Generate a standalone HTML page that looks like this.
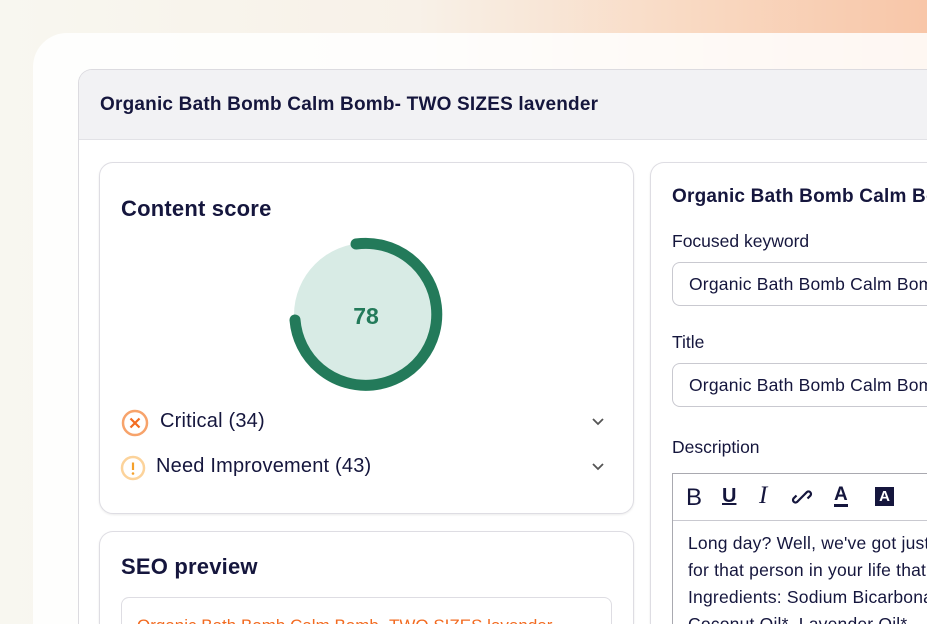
<!DOCTYPE html>
<html><head><meta charset="utf-8"><style>
*{margin:0;padding:0;box-sizing:border-box}
html,body{width:927px;height:624px;overflow:hidden}
body{position:relative;font-family:"Liberation Sans",sans-serif;color:#15163d;
background:linear-gradient(90deg,#f8f7f0 0%,#f8f1e8 45%,#f9d9c2 75%,#f8c6a8 100%);}
.outer{position:absolute;left:33px;top:33px;width:894px;height:591px;border-radius:34px 0 0 0;background:rgba(255,255,255,0.85);}
.panel{position:absolute;left:78px;top:69px;width:849px;height:555px;border:1px solid #dcdbe0;border-right:none;border-bottom:none;border-radius:14px 0 0 0;background:#fff;overflow:hidden}
.hdr{height:70px;background:#f2f2f4;border-bottom:1px solid #e2e2e6;padding:24px 0 0 21px;font-weight:bold;font-size:19px;letter-spacing:.2px}
.card{position:absolute;background:#fff;border:1px solid #dedde3;border-radius:14px;box-shadow:0 1px 2px rgba(0,0,0,.08)}
.t{font-weight:bold;font-size:22px;position:absolute;letter-spacing:.2px}
.lbl{position:absolute;font-size:17.5px;left:672px}
.inp{position:absolute;left:672px;width:255px;height:44px;border:1px solid #c9c9d0;border-right:none;border-radius:8px 0 0 8px;font-size:17.5px;padding:11px 0 0 16px;letter-spacing:.2px;overflow:hidden}
</style></head><body>
<div class="outer"></div>
<div class="panel"><div class="hdr">Organic Bath Bomb Calm Bomb- TWO SIZES lavender</div></div>
<div class="card" style="left:99px;top:162px;width:535px;height:352px"></div>
<div class="t" style="left:121px;top:196px">Content score</div>
<svg style="position:absolute;left:285px;top:234px" width="162" height="162" viewBox="0 0 162 162">
<circle cx="81" cy="81" r="72" fill="#d8ebe5"/>
<path d="M71 10 A71 71 0 1 1 10 86" fill="none" stroke="#237a5a" stroke-width="11" stroke-linecap="round"/>
<text x="81" y="90" text-anchor="middle" font-family="Liberation Sans" font-weight="bold" font-size="23" fill="#237a5a">78</text>
</svg>
<svg style="position:absolute;left:121px;top:409px" width="28" height="28"><circle cx="14" cy="14" r="12" fill="#fff" stroke="#f7a36b" stroke-width="2.5"/><path d="M9.5 9.5L18.5 18.5M18.5 9.5L9.5 18.5" stroke="#f26b21" stroke-width="2.2"/></svg>
<div style="position:absolute;left:160px;top:410px;font-size:20px;letter-spacing:.2px">Critical (34)</div>
<svg style="position:absolute;left:120px;top:455px" width="26" height="26"><circle cx="13" cy="13" r="11" fill="#fff" stroke="#fcd39b" stroke-width="2.5"/><path d="M13 7.5V15" stroke="#f5a02a" stroke-width="2.2"/><circle cx="13" cy="18.5" r="1.3" fill="#f5a02a"/></svg>
<div style="position:absolute;left:156px;top:455px;font-size:20px;letter-spacing:.2px">Need Improvement (43)</div>
<svg style="position:absolute;left:591px;top:416px" width="14" height="60"><path d="M2 3l5 5 5-5M2 48l5 5 5-5" fill="none" stroke="#555" stroke-width="1.8"/></svg>
<div class="card" style="left:99px;top:531px;width:535px;height:93px;border-bottom:none;border-radius:14px 14px 0 0"></div>
<div class="t" style="left:121px;top:554px">SEO preview</div>
<div style="position:absolute;left:121px;top:597px;width:491px;height:27px;border:1px solid #dedde3;border-bottom:none;border-radius:8px 8px 0 0;overflow:hidden"><div style="color:#f26b21;font-size:17px;padding:18px 0 0 15px;white-space:nowrap">Organic Bath Bomb Calm Bomb- TWO SIZES lavender</div></div>
<div class="card" style="left:650px;top:162px;width:277px;height:462px;border-right:none;border-bottom:none;border-radius:14px 0 0 0"></div>
<div style="position:absolute;left:672px;top:186px;width:255px;overflow:hidden;font-weight:bold;font-size:19px;white-space:nowrap;letter-spacing:.2px">Organic Bath Bomb Calm Bomb</div>
<div class="lbl" style="top:231px">Focused keyword</div>
<div class="inp" style="top:262px;white-space:nowrap">Organic Bath Bomb Calm Bomb</div>
<div class="lbl" style="top:332px">Title</div>
<div class="inp" style="top:363px;white-space:nowrap">Organic Bath Bomb Calm Bomb</div>
<div class="lbl" style="top:437px">Description</div>
<div style="position:absolute;left:672px;top:473px;width:255px;height:151px;border:1px solid #a9a9b0;border-right:none;border-bottom:none;overflow:hidden">
<div style="height:47px;border-bottom:1px solid #c9c9d0;background:#fff;position:relative">
<span style="position:absolute;left:13px;top:10px;font-size:24px">B</span>
<span style="position:absolute;left:49px;top:11px;font-size:20px;font-weight:bold;text-decoration:underline">U</span>
<span style="position:absolute;left:86px;top:8px;font-size:25px;font-family:'Liberation Serif';font-style:italic">I</span>
<svg style="position:absolute;left:118px;top:12px" width="22" height="22"><path d="M9 13l-3 3a2.5 2.5 0 0 1-3.5-3.5l3-3M13 9l3-3a2.5 2.5 0 0 1 3.5 3.5l-3 3M8 14l6-6" fill="none" stroke="#15163d" stroke-width="2.2"/></svg>
<span style="position:absolute;left:161px;top:11px;font-size:19px;font-weight:bold;border-bottom:3px solid #15163d;line-height:19px">A</span>
<span style="position:absolute;left:202px;top:13px;width:19px;height:19px;background:#15163d;color:#fff;font-size:15px;font-weight:bold;text-align:center;line-height:19px">A</span>
</div>
<div style="padding:9px 0 0 15px;font-size:17.5px;line-height:27px;white-space:nowrap;letter-spacing:.2px">Long day? Well, we've got just<br>for that person in your life that<br>Ingredients: Sodium Bicarbonate<br>Coconut Oil*, Lavender Oil*</div>
</div>
</body></html>
